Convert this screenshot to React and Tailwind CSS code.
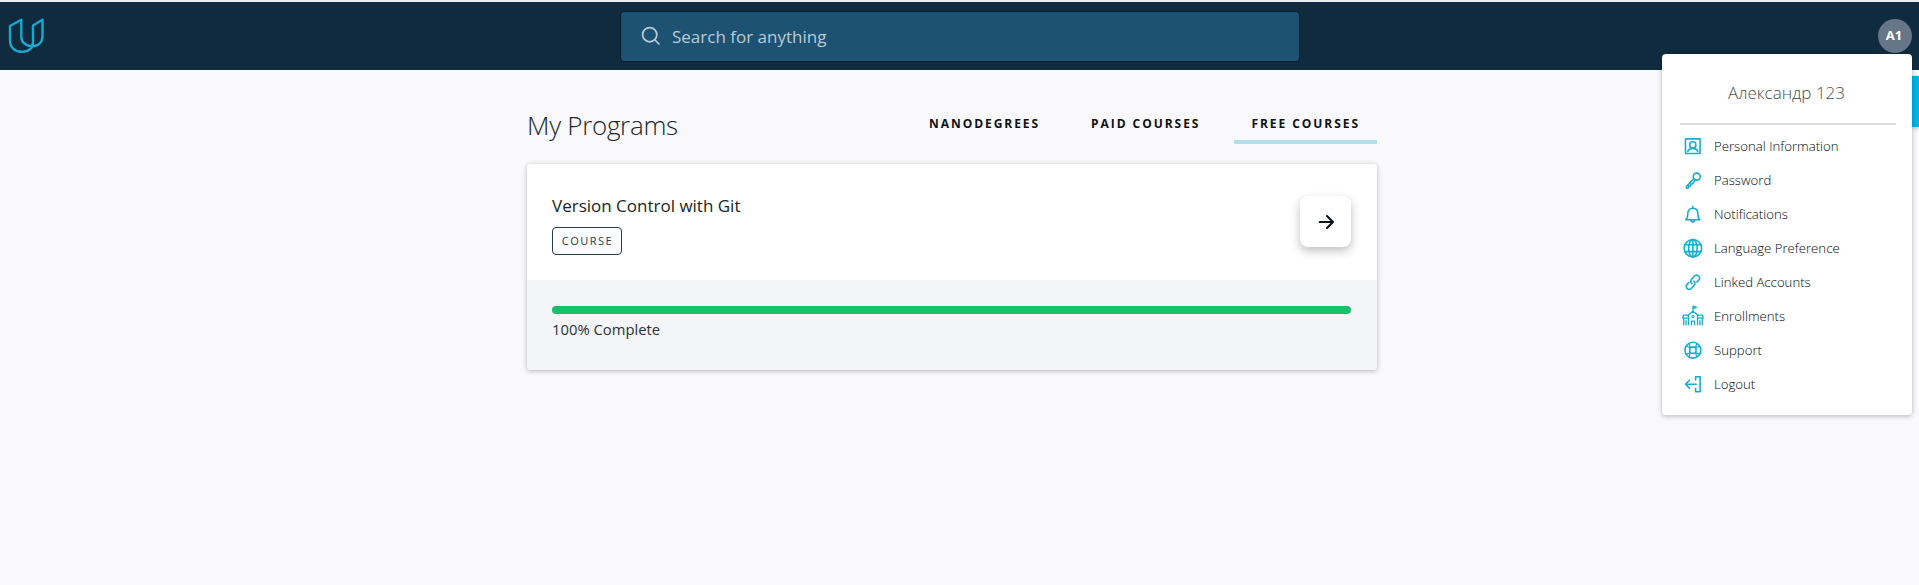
import React from "react";

function Glyph({ children, className = "h-5 w-5" }) {
  return (
    <svg viewBox="0 0 20 20" className={className} fill="none" stroke="#15aed2" strokeWidth="1.6" strokeLinecap="round" strokeLinejoin="round">
      {children}
    </svg>
  );
}

const menu = [
  {
    label: "Personal Information",
    icon: (
      <Glyph>
        <rect x="2.500" y="2.900" width="14.600" height="14.600" rx="0.6" />
        <circle cx="9.800" cy="8.900" r="3.100" />
        <path d="M4.800 15.500c.4-1.800 1.600-2.500 3.300-2.700h3.400c1.700.2 2.900.9 3.300 2.700" />
      </Glyph>
    ),
  },
  {
    label: "Password",
    icon: (
      <Glyph>
        <circle cx="13.700" cy="6.600" r="3.500" />
        <path d="m10.800 8.600-7.400 7.900.1 1.600 2-.1.300-1.900 1.800-.2.300-1.900 1.700-.2 2.300-3.200" />
      </Glyph>
    ),
  },
  {
    label: "Notifications",
    icon: (
      <Glyph>
        <path d="M2.800 15.700h14c-1.700-1.500-2-3.200-2-6 0-3.300-2-5.400-5-5.400s-5 2.100-5 5.400c0 2.800-.3 4.500-2 6Z" />
        <path d="M9.800 4.300V2.600M8 15.900c0 2.600 3.600 2.600 3.600 0" />
      </Glyph>
    ),
  },
  {
    label: "Language Preference",
    icon: (
      <Glyph>
        <circle cx="9.900" cy="10.200" r="8.700" />
        <ellipse cx="9.900" cy="10.200" rx="4.300" ry="8.700" />
        <path d="M9.900 1.500v17.400M2 6.800h15.800M2 13.600h15.800" />
      </Glyph>
    ),
  },
  {
    label: "Linked Accounts",
    icon: (
      <Glyph>
        <path d="M9 11.600c-1.500-1.300-1.600-3-.4-4.300l2.800-3c1.200-1.300 3-1.400 4.200-.3s1.300 2.900.1 4.200l-1.700 1.900M10.800 9c1.500 1.300 1.600 3 .4 4.300l-2.800 3c-1.200 1.300-3 1.400-4.200.3s-1.300-2.900-.1-4.200l1.700-1.900" />
      </Glyph>
    ),
  },
  {
    label: "Enrollments",
    icon: (
      <Glyph className="h-[22px] w-[22px]">
        <path strokeWidth="1.200" d="M10 5.600V1l3 1.200-3 1.200M5.200 9.600 10 5.700l4.800 3.900M5.900 9.300V18M14.100 9.300V18M5.600 9.200H1.400L.7 12h4.900M14.400 9.200h4.200l.7 2.800h-4.900M1.600 12.200V18M3.700 14.300V18M16.300 14.300V18M18.400 12.200V18M8.600 18v-3.400h2.800V18" />
        <circle cx="10" cy="10.600" r="1" strokeWidth="1" />
      </Glyph>
    ),
  },
  {
    label: "Support",
    icon: (
      <Glyph>
        <circle cx="9.900" cy="10.200" r="7.900" />
        <rect x="6.800" y="7.100" width="6.200" height="6.200" rx="1.800" />
        <path d="m6 3.500 1.300 4M3.200 6.300l4 1.300M13.800 3.500l-1.300 4M16.600 6.300l-4 1.300M6 16.900l1.300-4M3.200 14.100l4-1.300M13.800 16.900l-1.300-4M16.600 14.100l-4-1.300" strokeWidth="1.200" />
      </Glyph>
    ),
  },
  {
    label: "Logout",
    icon: (
      <Glyph>
        <path d="M12.600 5.900V2.700h4.500v15h-4.500v-3.200M2.600 10.200h10.600M6.400 6.300l-3.900 3.900 3.900 3.900" />
      </Glyph>
    ),
  },
];

function Header() {
  return (
    <header className="flex h-[70px] items-center border-t-2 border-[#eceff1] bg-[#112b3e] pr-[7px] pl-2">
      <svg viewBox="0 0 36 36" className="h-9 w-9 shrink-0" fill="none" stroke="#15a8d0" strokeWidth="2.400" strokeLinejoin="round">
        <path d="M2 8 13.300 1.700V19c0 5 4 9 10.700 9.300 6.500-.3 10.500-4.300 10.500-10.300V1.700L25 7.500V24c0 6.500-4.500 9.800-11 9.800C7 33.800 2 29.500 2 22.500Z" />
      </svg>
      <div className="ml-[576px] flex h-[51px] w-[680px] items-center rounded-[4px] border border-[#071d2d] bg-[#1e5272] pl-5">
        <svg viewBox="0 0 20 20" className="h-5 w-5" fill="none" stroke="#b7cbd7" strokeWidth="1.700" strokeLinecap="round">
          <circle cx="8.700" cy="8.700" r="7.100" />
          <path d="m14 14 4 4" />
        </svg>
        <span className="ml-[11px] pt-px text-[17px] text-[#b9cbd6]">Search for anything</span>
      </div>
      <div className="ml-auto flex h-[34px] w-[34px] items-center justify-center rounded-full bg-[#667688] pr-[2px] text-[13px] font-bold text-white">A1</div>
    </header>
  );
}

function UserMenu() {
  return (
    <aside className="absolute top-[54px] right-[7px] z-10 h-[361px] w-[250px] rounded-[4px] bg-white pr-4 pl-[18px] shadow-[0_1px_5px_rgba(0,0,0,0.28)]">
      <div className="flex h-[71px] items-center justify-center border-b-2 border-[#dcdcdc] pt-2 pr-[3px] text-[17px] font-light text-[#4a4d54]">Александр 123</div>
      <ul className="pt-[4px]">
        {menu.map(({ label, icon }) => (
          <li key={label} className="flex h-[34px] items-center pl-px">
            <span className="flex w-6 shrink-0 justify-center">{icon}</span>
            <span className="ml-[9px] text-[13.200px] leading-[18px] font-light whitespace-nowrap text-[#05080f]">{label}</span>
          </li>
        ))}
      </ul>
    </aside>
  );
}

const tabClass = "flex h-full items-start border-b-4 px-[17px] pt-[17px] text-[12px] leading-[18px] font-bold tracking-[1.950px] text-[#0b1117]";

function Programs() {
  return (
    <main className="mr-[542px] ml-[527px] w-[850px]">
      <div className="flex h-[74px] items-start justify-between pt-[10px]">
        <h1 className="pt-[23px] text-[26px] leading-[44px] font-light tracking-[-0.300px] text-[#202530]">My Programs</h1>
        <nav className="mt-[18px] flex h-[46px] gap-[17px]">
          <span className={`${tabClass} border-transparent`}>NANODEGREES</span>
          <span className={`${tabClass} border-transparent`}>PAID COURSES</span>
          <span className={`${tabClass} border-[#b4e1e9]`}>FREE COURSES</span>
        </nav>
      </div>
      <section className="mt-5 rounded-[4px] bg-white shadow-[0_1px_5px_rgba(0,0,0,0.28)]">
        <div className="flex h-[116px] items-start justify-between pt-8 pr-[26px] pl-[25px]">
          <div>
            <h2 className="text-[17px] leading-[20px] text-[#171f28]">Version Control with Git</h2>
            <span className="mt-[11px] flex h-7 w-[70px] items-center justify-center rounded-[4px] border border-[#2e3d49] bg-[#fafbfc] pl-px text-[11px] tracking-[1.500px] text-[#2e3d49]">COURSE</span>
          </div>
          <button className="flex h-[51px] w-[51px] items-center justify-center rounded-[8px] bg-white shadow-[0_4px_10px_rgba(0,0,0,0.25)]">
            <svg viewBox="0 0 20 20" className="h-5 w-5" fill="none" stroke="#0b1117" strokeWidth="2" strokeLinecap="round" strokeLinejoin="round">
              <path d="M3.700 10h13M11 4l6 6-6 6" />
            </svg>
          </button>
        </div>
        <div className="h-[90px] rounded-b-[4px] bg-[#f4f5f7] pt-[26px] pr-[26px] pl-[25px]">
          <div className="h-2 rounded-full bg-[#17c06b]" />
          <p className="mt-[4px] text-[14.800px] leading-[22px] text-[#2b3138]">100% Complete</p>
        </div>
      </section>
    </main>
  );
}

export default function App() {
  return (
    <div className="relative h-[585px] w-[1919px] overflow-hidden bg-[#f9f9fb] font-['Open_Sans',sans-serif]">
      <Header />
      <Programs />
      <div className="absolute top-[76px] right-0 h-[51px] w-[7px] bg-[#02b3e4] shadow-[0_1px_4px_rgba(0,0,0,0.3)]" />
      <UserMenu />
    </div>
  );
}
